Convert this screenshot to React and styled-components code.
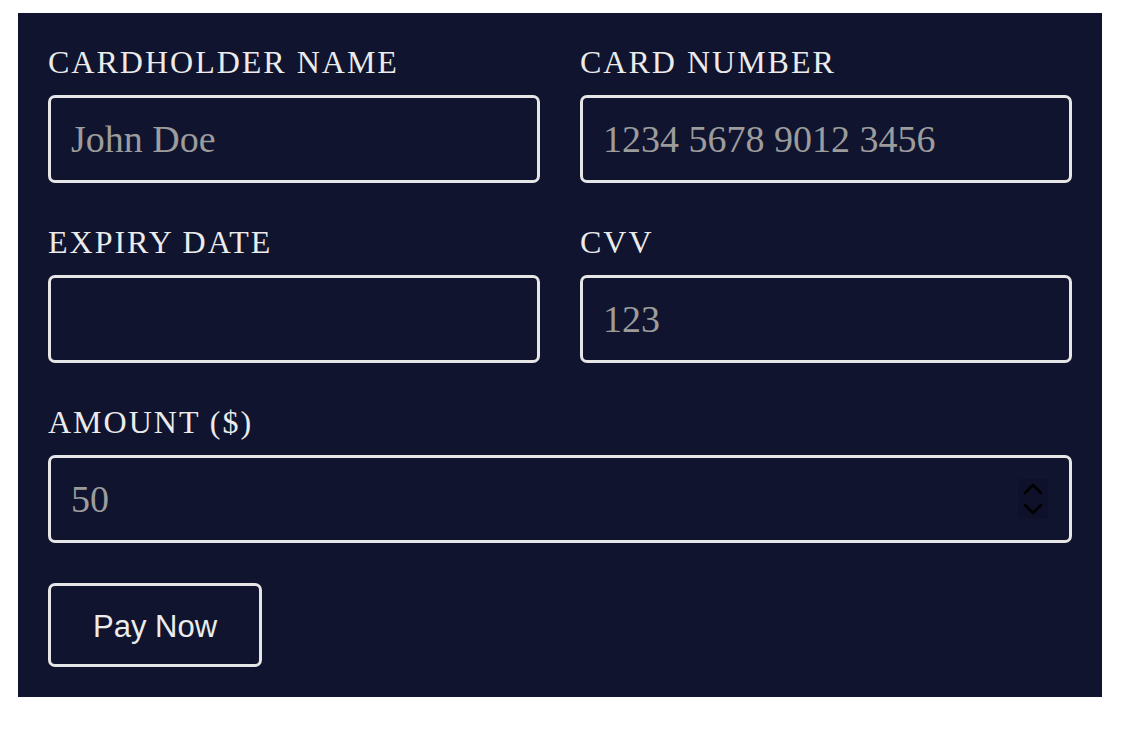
import React from "react";
import styled, { createGlobalStyle } from "styled-components";

const Global = createGlobalStyle`
  html, body { margin: 0; padding: 0; background: #ffffff; }
  body { font-family: "Liberation Serif", "Times New Roman", serif; }
  * { box-sizing: border-box; }
`;

const Page = styled.div`
  padding: 13px 32px 0 18px;
`;

const Panel = styled.form`
  width: 1084px;
  background: #10142e;
  padding: 31px 30px 30px;
  display: flex;
  flex-direction: column;
  gap: 40px;
`;

const Grid = styled.div`
  display: grid;
  grid-template-columns: 1fr 1fr;
  column-gap: 40px;
  row-gap: 41px;
`;

const Field = styled.div`
  display: flex;
  flex-direction: column;
  grid-column: ${(p) => (p.$full ? "1 / -1" : "auto")};
`;

const Label = styled.label`
  font-family: "Liberation Serif", "Times New Roman", serif;
  font-size: 32px;
  line-height: 37px;
  letter-spacing: 2px;
  text-transform: uppercase;
  color: #ebebeb;
  margin-bottom: 14px;
`;

const InputWrap = styled.div`
  position: relative;
`;

const Input = styled.input`
  width: 100%;
  height: 88px;
  border: 3px solid #e6e6e6;
  border-radius: 7px;
  background: transparent;
  color: #e6e6e6;
  padding: 0 20px;
  font-family: "Liberation Serif", "Times New Roman", serif;
  font-size: 38px;
  outline: none;
  -moz-appearance: textfield;
  &::placeholder { color: #9c9c9c; }
  &::-webkit-outer-spin-button,
  &::-webkit-inner-spin-button { -webkit-appearance: none; margin: 0; }
`;

const Spinner = styled.div`
  position: absolute;
  right: 24px;
  top: 50%;
  transform: translateY(-50%);
  width: 30px;
  height: 40px;
  background: #0e1129;
  display: flex;
  align-items: center;
  justify-content: center;
  pointer-events: none;
`;

const Button = styled.button`
  align-self: flex-start;
  width: 214px;
  height: 84px;
  border: 3px solid #e6e6e6;
  border-radius: 7px;
  background: transparent;
  color: #ececec;
  font-family: "Liberation Sans", Arial, sans-serif;
  font-size: 31px;
  padding: 4px 0 0;
  cursor: pointer;
`;

export default function App() {
  return (
    <Page>
      <Global />
      <Panel onSubmit={(e) => e.preventDefault()}>
        <Grid>
          <Field>
            <Label>Cardholder Name</Label>
            <Input placeholder="John Doe" />
          </Field>
          <Field>
            <Label>Card Number</Label>
            <Input placeholder="1234 5678 9012 3456" />
          </Field>
          <Field>
            <Label>Expiry Date</Label>
            <Input />
          </Field>
          <Field>
            <Label>CVV</Label>
            <Input placeholder="123" />
          </Field>
          <Field $full>
            <Label>Amount ($)</Label>
            <InputWrap>
              <Input type="number" placeholder="50" />
              <Spinner>
                <svg width="22" height="36" viewBox="0 0 22 36" fill="none" stroke="#000" strokeWidth="2.6" strokeLinecap="round" strokeLinejoin="round">
                  <path d="M3 12 L11 4 L19 12" />
                  <path d="M3 24 L11 32 L19 24" />
                </svg>
              </Spinner>
            </InputWrap>
          </Field>
        </Grid>
        <Button type="submit">Pay Now</Button>
      </Panel>
    </Page>
  );
}
